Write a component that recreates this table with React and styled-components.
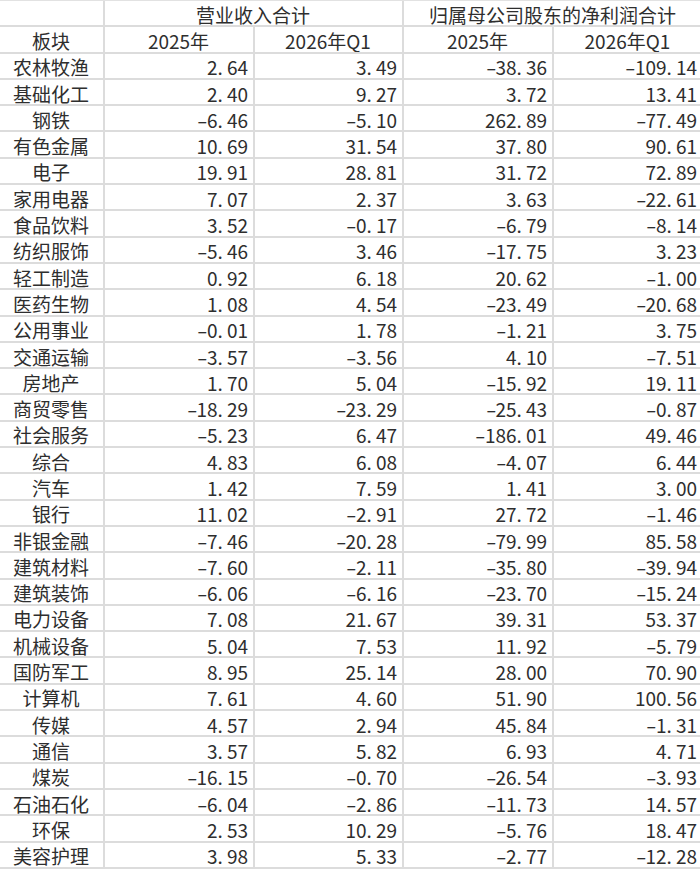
import React from 'react'
import styled, { createGlobalStyle } from 'styled-components'

const GlobalStyle = createGlobalStyle`
html, body {
  margin: 0;
  padding: 0;
  background: #fff;
  overflow: hidden;
}
body {
  font-family: "Noto Sans CJK SC", "Noto Sans", sans-serif;
  color: #2e2e2e;
}
`

const rows = [
  ['农林牧渔', '2.64', '3.49', '-38.36', '-109.14'],
  ['基础化工', '2.40', '9.27', '3.72', '13.41'],
  ['钢铁', '-6.46', '-5.10', '262.89', '-77.49'],
  ['有色金属', '10.69', '31.54', '37.80', '90.61'],
  ['电子', '19.91', '28.81', '31.72', '72.89'],
  ['家用电器', '7.07', '2.37', '3.63', '-22.61'],
  ['食品饮料', '3.52', '-0.17', '-6.79', '-8.14'],
  ['纺织服饰', '-5.46', '3.46', '-17.75', '3.23'],
  ['轻工制造', '0.92', '6.18', '20.62', '-1.00'],
  ['医药生物', '1.08', '4.54', '-23.49', '-20.68'],
  ['公用事业', '-0.01', '1.78', '-1.21', '3.75'],
  ['交通运输', '-3.57', '-3.56', '4.10', '-7.51'],
  ['房地产', '1.70', '5.04', '-15.92', '19.11'],
  ['商贸零售', '-18.29', '-23.29', '-25.43', '-0.87'],
  ['社会服务', '-5.23', '6.47', '-186.01', '49.46'],
  ['综合', '4.83', '6.08', '-4.07', '6.44'],
  ['汽车', '1.42', '7.59', '1.41', '3.00'],
  ['银行', '11.02', '-2.91', '27.72', '-1.46'],
  ['非银金融', '-7.46', '-20.28', '-79.99', '85.58'],
  ['建筑材料', '-7.60', '-2.11', '-35.80', '-39.94'],
  ['建筑装饰', '-6.06', '-6.16', '-23.70', '-15.24'],
  ['电力设备', '7.08', '21.67', '39.31', '53.37'],
  ['机械设备', '5.04', '7.53', '11.92', '-5.79'],
  ['国防军工', '8.95', '25.14', '28.00', '70.90'],
  ['计算机', '7.61', '4.60', '51.90', '100.56'],
  ['传媒', '4.57', '2.94', '45.84', '-1.31'],
  ['通信', '3.57', '5.82', '6.93', '4.71'],
  ['煤炭', '-16.15', '-0.70', '-26.54', '-3.93'],
  ['石油石化', '-6.04', '-2.86', '-11.73', '14.57'],
  ['环保', '2.53', '10.29', '-5.76', '18.47'],
  ['美容护理', '3.98', '5.33', '-2.77', '-12.28'],
]

// excel-ish number look: wide minus, dot sits in a digit-wide slot
const Num = ({ value }) => {
  const neg = value.startsWith('-')
  const [int, frac] = value.replace('-', '').split('.')
  return (
    <>
      {neg && <Minus>-</Minus>}
      {int}
      <Dot>.</Dot>
      {frac}
    </>
  )
}

const App = () => {
  return (
    <>
      <GlobalStyle />
      <Sheet>
        <Cell />
        <Cell span={2} align="center">营业收入合计</Cell>
        <Cell span={2} align="center">归属母公司股东的净利润合计</Cell>

        <Cell align="center">板块</Cell>
        <Cell align="center">2025年</Cell>
        <Cell align="center">2026年Q1</Cell>
        <Cell align="center">2025年</Cell>
        <Cell align="center">2026年Q1</Cell>

        {rows.map((r) => (
          <React.Fragment key={r[0]}>
            <Cell align="center">{r[0]}</Cell>
            {r.slice(1).map((v, i) => (
              <Cell key={i} align="right">
                <Num value={v} />
              </Cell>
            ))}
          </React.Fragment>
        ))}
      </Sheet>
    </>
  )
}

const Sheet = styled.div`
display: grid;
grid-template-columns: 105px 150px 149px 150px 150px;
grid-auto-rows: 26.3px;
width: 704px;
border-top: 1px solid #e2e2e2;
`

const Cell = styled.div`
grid-column: span ${(p) => p.span || 1};
display: flex;
align-items: center;
justify-content: ${(p) => (p.align === 'right' ? 'flex-end' : 'center')};
padding: 2px 5px 0 4px;
box-sizing: border-box;
border-right: 2px solid #dcdcdc;
border-bottom: 2px solid #dcdcdc;
font-size: 19px;
line-height: 1;
white-space: nowrap;
overflow: hidden;
`

const Minus = styled.span`
display: inline-block;
transform: scaleX(1.6);
margin: 0 1px 0 0;
`

const Dot = styled.span`
margin-right: 4px;
`

export default App
